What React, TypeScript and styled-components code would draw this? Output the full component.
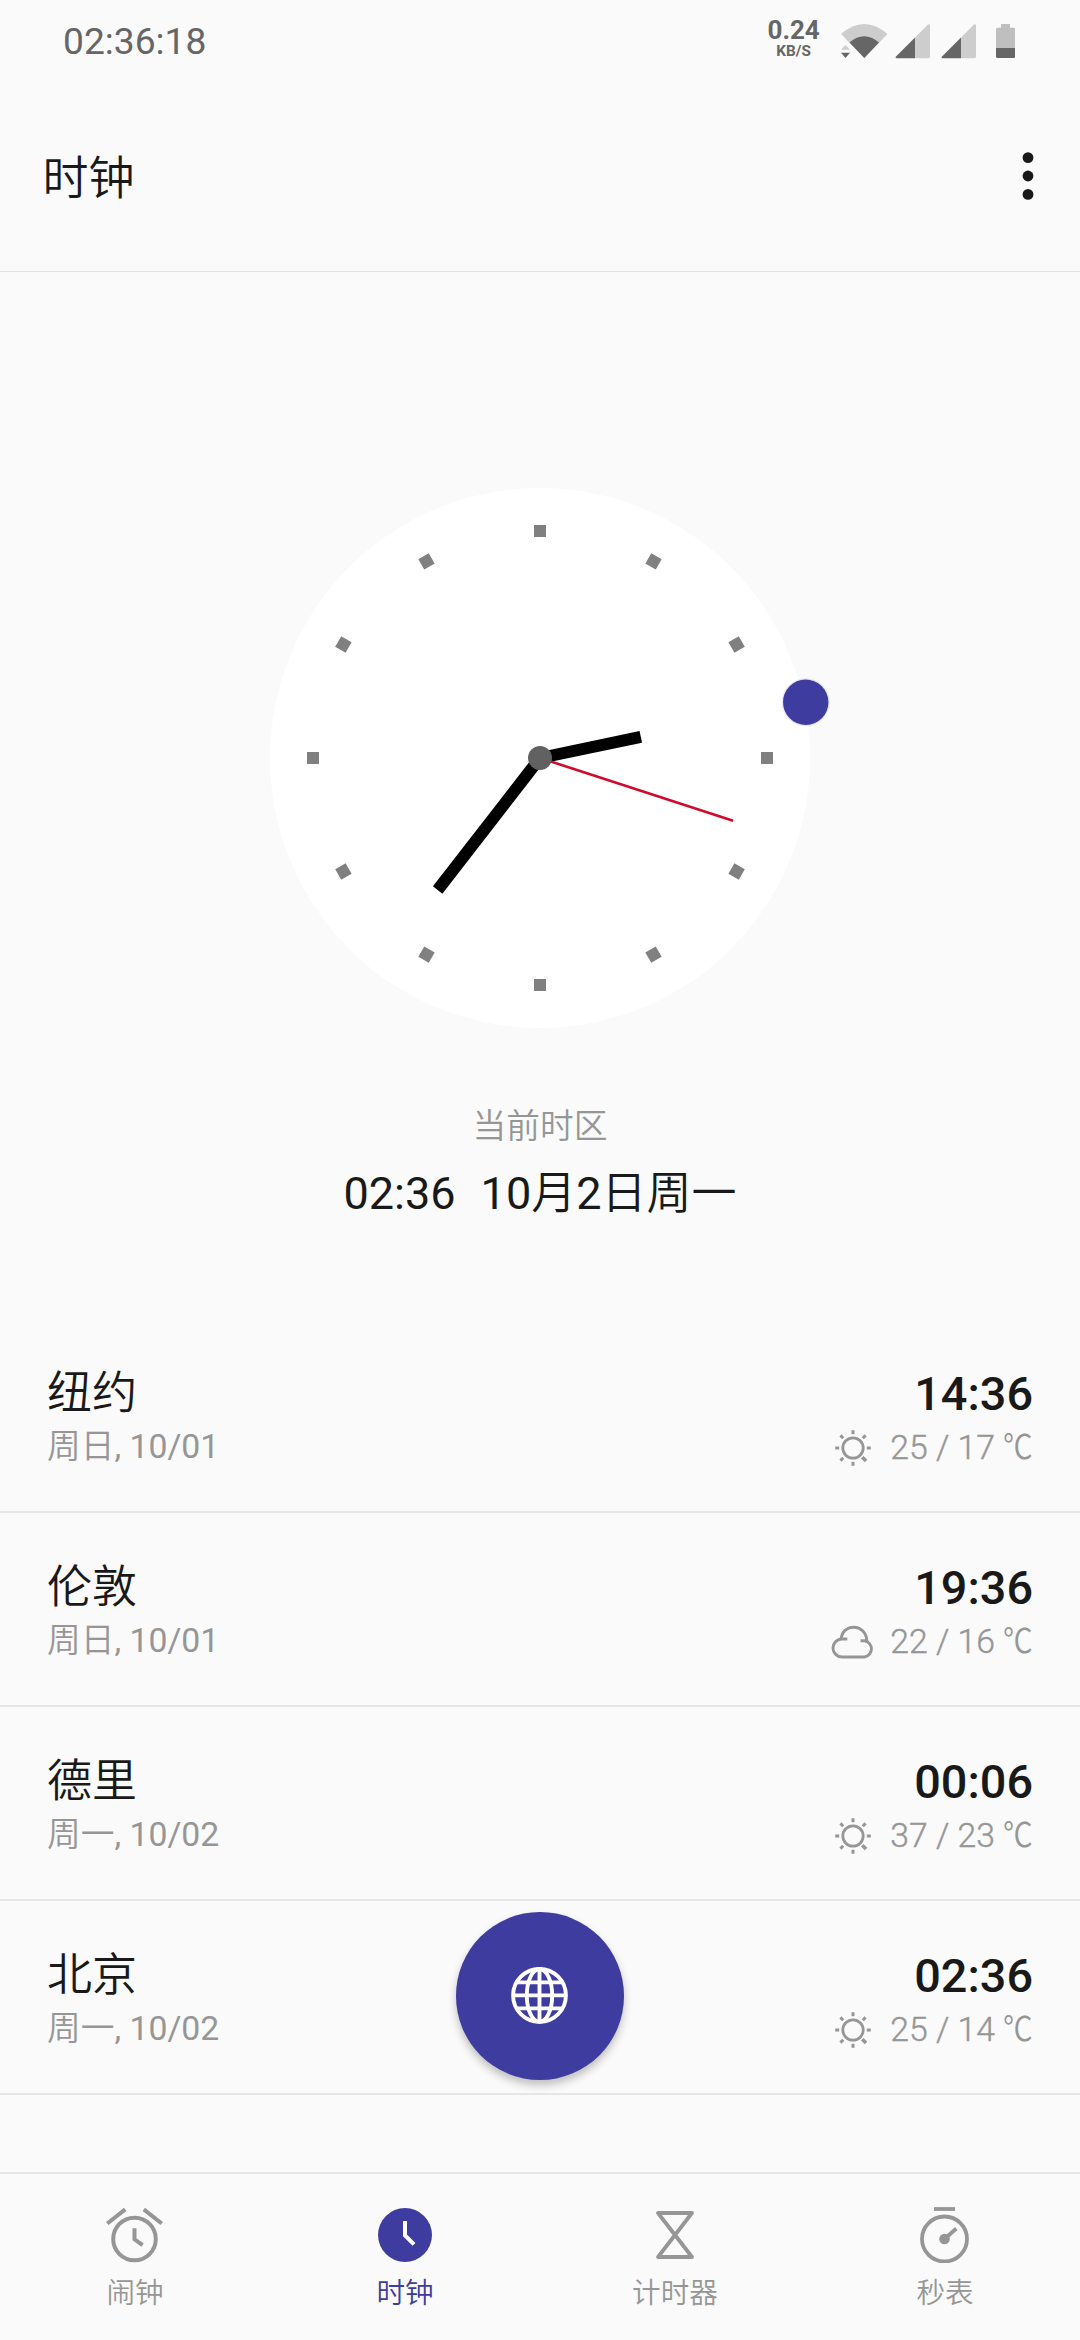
import React from "react";
import styled, { createGlobalStyle } from "styled-components";

const INK = "#191919";
const MUTED = "#969696";
const STATUS = "#666666";
const ACCENT = "#3f3c9f";
const LINE = "#e6e6e6";

const GlobalStyle = createGlobalStyle`
  *, *::before, *::after { box-sizing: border-box; }
  body {
    margin: 0;
    background: #fafafa;
    font-family: Roboto, "Noto Sans CJK SC DemiLight", "Noto Sans CJK SC", sans-serif;
    color: ${INK};
  }
  svg { display: block; flex: none; }
`;

const Screen = styled.div`
  position: relative;
  display: flex;
  flex-direction: column;
  width: 1080px;
  height: 2340px;
  overflow: hidden;
  background: #fafafa;
`;

const StatusBar = styled.header`
  display: flex;
  align-items: center;
  justify-content: space-between;
  height: 81px;
  padding: 0 64.7px 0 63px;
  color: ${STATUS};
`;

const StatusTime = styled.span`
  padding-top: 1px;
  font-size: 37.2px;
  line-height: 44px;
`;

const StatusIcons = styled.div`
  display: flex;
  align-items: center;
`;

const NetSpeed = styled.div`
  display: flex;
  flex-direction: column;
  align-items: center;
  width: 54px;
  margin-right: 19.3px;
  padding-bottom: 4px;
  font-weight: 700;
`;

const SpeedValue = styled.span`
  font-size: 26px;
  line-height: 25px;
`;

const SpeedUnit = styled.span`
  font-size: 15.3px;
  line-height: 16px;
`;

const SignalPair = styled.div`
  display: flex;
  margin: 0 10.3px 0 5.7px;
`;

const TitleBar = styled.div`
  display: flex;
  align-items: center;
  justify-content: space-between;
  height: 191px;
  padding: 0 32px 0 42.5px;
  border-bottom: 1px solid #e2e2e2;
`;

const Title = styled.h1`
  margin: 0;
  padding-top: 3px;
  font-size: 46px;
  font-weight: 400;
  line-height: 60px;
`;

const MenuButton = styled.button`
  display: flex;
  align-items: center;
  justify-content: center;
  width: 40px;
  height: 80px;
  padding: 0;
  border: 0;
  background: none;
`;

const ClockPanel = styled.section`
  display: flex;
  flex-direction: column;
  align-items: center;
  height: 1047px;
  padding-top: 186px;
`;

const ZoneLabel = styled.div`
  margin-top: 47px;
  font-size: 33.75px;
  line-height: 44px;
  color: ${MUTED};
`;

const ZoneTime = styled.div`
  display: flex;
  gap: 25px;
  margin-top: 17px;
  font-size: 45px;
  line-height: 56px;
`;

const CityList = styled.main`
  flex: 1;
  min-height: 0;
`;

const CityRow = styled.article`
  display: flex;
  justify-content: space-between;
  height: 194px;
  padding: 45px 48px 0 47px;
  border-bottom: 2px solid ${LINE};
`;

const CityColumn = styled.div<{ $end?: boolean }>`
  display: flex;
  flex-direction: column;
  align-items: ${(p) => (p.$end ? "flex-end" : "flex-start")};
`;

const CityName = styled.div`
  font-size: 45px;
  line-height: 59px;
`;

const CityDate = styled.div`
  font-size: 33.75px;
  line-height: 48px;
  color: ${MUTED};
`;

const CityTime = styled.div`
  margin-right: -1px;
  padding-top: 1px;
  font-size: 46.8px;
  font-weight: 500;
  line-height: 59px;
`;

const Weather = styled.div`
  display: flex;
  align-items: center;
  gap: 15.5px;
  color: ${MUTED};
`;

const Temperature = styled.div`
  display: flex;
  font-size: 33.75px;
  font-weight: 300;
  line-height: 48px;
  white-space: pre;
  -webkit-text-stroke: 0.4px ${MUTED};
`;

const Unit = styled.span`
  width: 28.8px;
  transform: scaleX(0.88);
  transform-origin: left center;
  -webkit-text-stroke: 0;
`;

const AddCityButton = styled.button`
  position: absolute;
  left: 456px;
  top: 1912px;
  display: flex;
  align-items: center;
  justify-content: center;
  width: 168px;
  height: 168px;
  padding: 0;
  border: 0;
  border-radius: 50%;
  background: ${ACCENT};
  box-shadow: 0 5px 8px rgba(0, 0, 0, 0.24);
`;

const TabBar = styled.nav`
  display: grid;
  grid-template-columns: repeat(4, 1fr);
  height: 168px;
  border-top: 2px solid ${LINE};
`;

const Tab = styled.a<{ $active?: boolean }>`
  display: flex;
  flex-direction: column;
  align-items: center;
  padding-top: 29px;
  color: ${(p) => (p.$active ? ACCENT : MUTED)};
`;

const TabLabel = styled.span`
  margin-top: 10px;
  font-size: 28.6px;
  line-height: 40px;
`;

const HOURS = Array.from({ length: 12 }, (_, i) => i * 30);

function ClockFace({ h, m, s }: { h: number; m: number; s: number }) {
  const minute = m * 6 + s * 0.1;
  const hour = h * 30 + m * 0.5 + s / 120;
  return (
    <svg width="600" height="600" viewBox="-300 -300 600 600">
      <circle r="270" fill="#fff" />
      {HOURS.map((a) => (
        <rect key={a} x="-6" y="-233" width="12" height="12" fill="#808080" transform={`rotate(${a})`} />
      ))}
      <rect x="-6" y="-103" width="12" height="103" fill="#000" transform={`rotate(${hour})`} />
      <rect x="-6" y="-167" width="12" height="167" fill="#000" transform={`rotate(${minute})`} />
      <rect x="-1.3" y="-203" width="2.6" height="203" fill="#cf0a2c" transform={`rotate(${s * 6})`} />
      <circle r="12" fill="#616161" />
      <g transform={`rotate(${hour})`}>
        <circle cy="-271.5" r="24" fill={ACCENT} opacity="0.12" />
        <circle cy="-271.5" r="22.7" fill={ACCENT} />
      </g>
    </svg>
  );
}

const Wifi = () => (
  <svg width="48" height="36" viewBox="0 0 48 36">
    <path d="M1 11 Q24 -9 47.5 11 L24.3 35 Z" fill="#cdcdcd" />
    <path d="M9.5 19.5 Q24 7 39 19.5 L24.3 35 Z" fill={STATUS} />
    <path d="M1 26.8 L5.5 22 L10 26.8 Z" fill="#cdcdcd" />
    <path d="M1 29.8 L5.5 35 L10 29.8 Z" fill={STATUS} />
  </svg>
);

const Signal = () => (
  <svg width="46" height="36" viewBox="0 0 46 36">
    <path d="M21 14.5 L34 1.5 Q36 0.5 36 2.5 V33.5 Q36 35.2 34.5 35.2 H21 Z" fill="#cdcdcd" />
    <path d="M21 14.5 V35.3 H2.5 Q0.8 35 2 33.5 Z" fill={STATUS} />
  </svg>
);

const Battery = () => (
  <svg width="19.4" height="36" viewBox="0 0 19.4 36">
    <path d="M5 1 H14 V4.7 H17.8 Q19.4 4.7 19.4 6.3 V25 H0 V6.3 Q0 4.7 1.6 4.7 H5 Z" fill="#bfbfbf" />
    <path d="M0 25 H19.4 V33.4 Q19.4 35 17.8 35 H1.6 Q0 35 0 33.4 Z" fill={STATUS} />
  </svg>
);

const MoreDots = () => (
  <svg width="12" height="50" viewBox="0 0 12 50" fill={INK}>
    <circle cx="6" cy="6.6" r="5.4" />
    <circle cx="6" cy="25" r="5.4" />
    <circle cx="6" cy="43.4" r="5.4" />
  </svg>
);

const Sun = () => (
  <svg width="44" height="44" viewBox="-22 -22 44 44" fill="none" stroke={MUTED} strokeWidth="2.8">
    <circle r="10.2" />
    {[0, 45, 90, 135, 180, 225, 270, 315].map((a) => (
      <path key={a} d={a === 135 ? "M0 -13 V-18.5" : "M0 -13.8 V-17.8"} transform={`rotate(${a})`} strokeWidth={a === 135 ? 3.6 : 3} />
    ))}
  </svg>
);

const Cloud = () => (
  <svg width="44" height="44" viewBox="0 0 44 44" fill="none" stroke={MUTED} strokeWidth="2.9">
    <path d="M16.3 19 H11 A8.9 8.9 0 0 0 11 37 H33.5 A8.2 8.2 0 0 0 33.5 20.8 H29.5" />
    <path d="M10 20 C10.5 12 15.5 7.2 22.6 7.2 C30 7.2 35.5 12.8 35.8 20.8" />
  </svg>
);

const Globe = () => (
  <svg width="60" height="60" viewBox="-30 -30 60 60" fill="none" stroke="#fff" strokeWidth="3.9">
    <g transform="translate(-0.5 -0.6)">
      <circle r="26.4" />
      <ellipse rx="12.7" ry="26.4" />
      <path d="M0 -26 V26 M-26 0 H26 M-23 -13 H23 M-23 13 H23" />
    </g>
  </svg>
);

const AlarmIcon = () => (
  <svg width="60" height="60" viewBox="0 0 60 60" fill="none" stroke="currentColor" strokeWidth="4">
    <circle cx="29.5" cy="36" r="21.3" />
    <path d="M2.3 20.5 L20.2 6.4 M38.8 6.4 L56.7 20.5" />
    <path d="M29.5 25.3 V36.3 L37.6 42.2" />
  </svg>
);

const ClockIcon = () => (
  <svg width="60" height="60" viewBox="0 0 60 60" fill="none">
    <circle cx="30" cy="32" r="27" fill="currentColor" />
    <path d="M30 18 V32.3 L39 41.3" stroke="#fff" strokeWidth="4" />
  </svg>
);

const HourglassIcon = () => (
  <svg width="60" height="60" viewBox="0 0 60 60" fill="none" stroke="currentColor" strokeWidth="3.8" strokeLinejoin="round">
    <path d="M13 10 H47 L13 54 H47 Z" />
  </svg>
);

const StopwatchIcon = () => (
  <svg width="60" height="60" viewBox="0 0 60 60" fill="none" stroke="currentColor" strokeWidth="3.8">
    <path d="M19 6 H40" />
    <circle cx="29.5" cy="36" r="22.5" />
    <circle cx="29.5" cy="36" r="5.3" fill="currentColor" stroke="none" />
    <path d="M29.5 36 L41.3 25.5" />
  </svg>
);

const CITIES = [
  { name: "纽约", date: "周日, 10/01", time: "14:36", temp: "25 / 17 ", Icon: Sun },
  { name: "伦敦", date: "周日, 10/01", time: "19:36", temp: "22 / 16 ", Icon: Cloud },
  { name: "德里", date: "周一, 10/02", time: "00:06", temp: "37 / 23 ", Icon: Sun },
  { name: "北京", date: "周一, 10/02", time: "02:36", temp: "25 / 14 ", Icon: Sun },
];

const TABS = [
  { label: "闹钟", Icon: AlarmIcon },
  { label: "时钟", Icon: ClockIcon, active: true },
  { label: "计时器", Icon: HourglassIcon },
  { label: "秒表", Icon: StopwatchIcon },
];

export default function App() {
  return (
    <>
      <GlobalStyle />
      <Screen>
        <StatusBar>
          <StatusTime>02:36:18</StatusTime>
          <StatusIcons>
            <NetSpeed>
              <SpeedValue>0.24</SpeedValue>
              <SpeedUnit>KB/S</SpeedUnit>
            </NetSpeed>
            <Wifi />
            <SignalPair>
              <Signal />
              <Signal />
            </SignalPair>
            <Battery />
          </StatusIcons>
        </StatusBar>
        <TitleBar>
          <Title>时钟</Title>
          <MenuButton aria-label="更多">
            <MoreDots />
          </MenuButton>
        </TitleBar>
        <ClockPanel>
          <ClockFace h={2} m={36} s={18} />
          <ZoneLabel>当前时区</ZoneLabel>
          <ZoneTime>
            <span>02:36</span>
            <span>10月2日周一</span>
          </ZoneTime>
        </ClockPanel>
        <CityList>
          {CITIES.map(({ name, date, time, temp, Icon }) => (
            <CityRow key={name}>
              <CityColumn>
                <CityName>{name}</CityName>
                <CityDate>{date}</CityDate>
              </CityColumn>
              <CityColumn $end>
                <CityTime>{time}</CityTime>
                <Weather>
                  <Icon />
                  <Temperature>
                    <span>{temp}</span>
                    <Unit>℃</Unit>
                  </Temperature>
                </Weather>
              </CityColumn>
            </CityRow>
          ))}
        </CityList>
        <TabBar>
          {TABS.map(({ label, Icon, active }) => (
            <Tab key={label} $active={active}>
              <Icon />
              <TabLabel>{label}</TabLabel>
            </Tab>
          ))}
        </TabBar>
        <AddCityButton aria-label="添加城市">
          <Globe />
        </AddCityButton>
      </Screen>
    </>
  );
}
